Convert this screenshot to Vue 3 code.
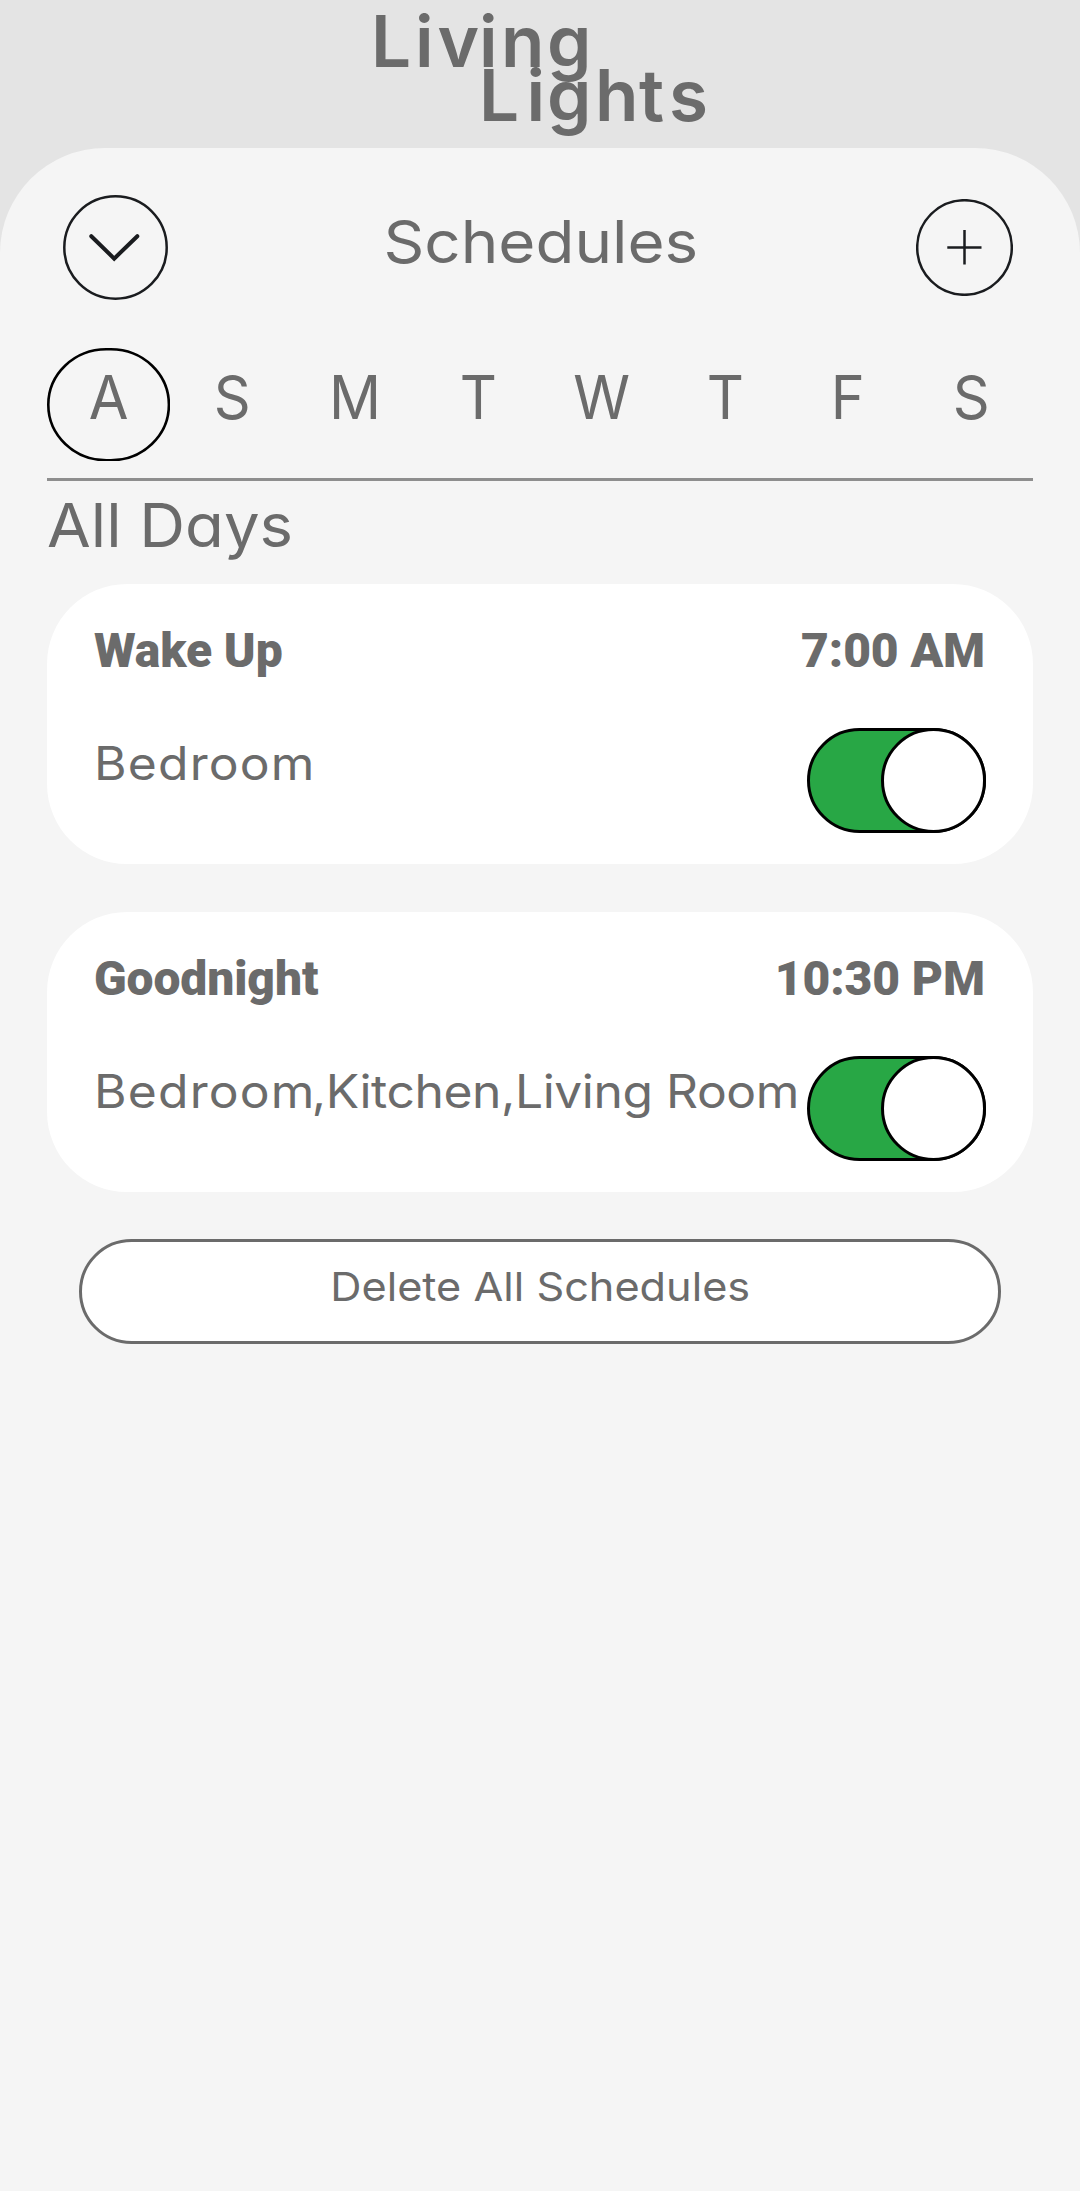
<script setup>
const days = ['A', 'S', 'M', 'T', 'W', 'T', 'F', 'S']
const selected = 0
const schedules = [
  { name: 'Wake Up', time: '7:00 AM', room: 'Bedroom', more: '' },
  { name: 'Goodnight', time: '10:30 PM', room: 'Bedroom', more: ',Kitchen,Living Room' },
]
</script>

<template>
  <div class="app">
    <header class="brand">
      <svg width="400" height="148" viewBox="340 0 400 148">
        <g class="logo">
          <text y="67" x="371 415 437.5 479 501 547">Living</text>
          <text y="121" x="479 526.5 547 595 639 669">Lights</text>
        </g>
      </svg>
    </header>
    <main class="panel">
      <div class="title-row">
        <button class="round down">
          <svg width="105" height="105" viewBox="0 0 105 105"><circle cx="52.5" cy="52.5" r="51.2" /><path class="chev" d="M28.3 41.2 51.2 63.6 74.3 41.2" /></svg>
        </button>
        <h1>Schedules</h1>
        <button class="round plus">
          <svg width="97" height="97" viewBox="0 0 97 97"><circle cx="48.5" cy="48.5" r="47.3" /><path d="M31.3 48.5H65.5M48.5 31V65.5" /></svg>
        </button>
      </div>
      <nav class="days">
        <div v-for="(d, i) in days" :key="i" class="day">
          <svg v-if="i === selected" class="ring" width="123.25" height="113.5"><rect x="1.3" y="1.3" width="120.6" height="110.9" rx="58" ry="55.4" /></svg>
          <span>{{ d }}</span>
        </div>
      </nav>
      <h2><span>All Days</span></h2>
      <section v-for="s in schedules" :key="s.name" class="card">
        <div class="row top"><b>{{ s.name }}</b><b>{{ s.time }}</b></div>
        <div class="row">
          <span class="rooms"><span class="first">{{ s.room }}</span><span class="more">{{ s.more }}</span></span>
          <span class="toggle"><i></i></span>
        </div>
      </section>
      <button class="delete"><span>Delete All Schedules</span></button>
    </main>
  </div>
</template>

<style>
body { margin: 0; background: #e4e4e4; }
</style>
<style scoped>
* { box-sizing: border-box; }
.app { width: 1080px; height: 2191px; background: #e4e4e4; color: #6b6b6b; font-family: Inter, sans-serif; font-feature-settings: "cv11"; display: flex; flex-direction: column; overflow: hidden; }
.brand { height: 148px; display: flex; justify-content: center; flex: none; }
.brand svg { overflow: visible; }
.logo { font: 600 71px Inter, sans-serif; fill: #6b6b6b; }
.panel { flex: 1; background: #f5f5f5; border-radius: 105px 105px 0 0; padding: 47px 47px 0; }
h1, h2 { margin: 0; font-weight: 400; }
button { font: inherit; color: inherit; padding: 0; border: 0; background: none; }
.title-row { height: 152.7px; display: flex; justify-content: space-between; align-items: flex-start; padding: 0 20px 0 16px; }
.round svg { display: block; fill: none; stroke: #1a1c1f; stroke-width: 2.5; }
.round .chev { stroke-width: 4; stroke-linecap: round; }
.plus { margin-top: 4px; }
h1 { font-size: 59px; line-height: 70px; margin: 12px 3px 0 0; transform: scaleX(1.079); }
.days { display: flex; height: 133px; border-bottom: 3px solid #8e8e8e; }
.day { position: relative; flex: 1; height: 113.5px; text-align: center; font-size: 60px; line-height: 99px; }
.day span { display: inline-block; transform: scaleX(0.96); }
.ring { position: absolute; left: 0; top: 0; fill: none; stroke: #000; stroke-width: 2.6; }
h2 { font-size: 61px; line-height: 88px; height: 103px; }
h2 span { display: inline-block; transform: scaleX(1.04); transform-origin: 0 0; }
.card { height: 280px; margin-bottom: 48px; padding: 0 48px 0 47px; background: #fff; border-radius: 80px; }
.card:last-of-type { margin-bottom: 47px; }
.row { display: flex; justify-content: space-between; }
.top { height: 144px; padding-top: 39px; font: 700 48px/56px Roboto, sans-serif; letter-spacing: -0.1px; }
.rooms { font-size: 46px; line-height: 70px; white-space: nowrap; transform: scaleX(1.082); transform-origin: 0 0; }
.first { letter-spacing: 1.1px; }
.more { margin-left: -3.5px; letter-spacing: -0.4px; }
.toggle { flex: none; width: 179px; height: 105px; margin-right: -1px; border: 3px solid #000; border-radius: 53px; background: #28a745; display: flex; justify-content: flex-end; }
.toggle i { width: 105px; height: 105px; margin: -3px; border: 3px solid #000; border-radius: 50%; background: #fff; flex: none; }
.delete { display: block; width: 922px; height: 105px; margin: 0 auto; padding-bottom: 9px; border: 3px solid #6b6b6b; border-radius: 53px; background: #fff; font-size: 40px; }
.delete span { display: inline-block; transform: scaleX(1.081); }
</style>
